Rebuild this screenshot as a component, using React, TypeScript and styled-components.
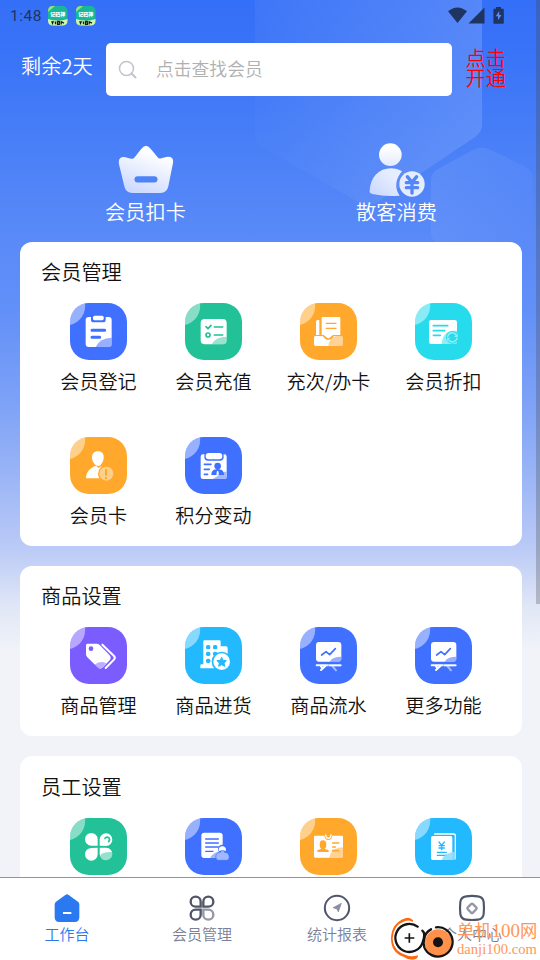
import React from 'react';
import styled, { createGlobalStyle } from 'styled-components';

const GlobalStyle = createGlobalStyle`
  * { box-sizing: border-box; }
  body { margin: 0; overflow: hidden; }
`;

const Phone = styled.div`
  position: relative;
  width: 540px;
  height: 960px;
  overflow: hidden;
  display: flex;
  flex-direction: column;
  background: #f1f3f8;
  font-family: 'Noto Sans CJK SC', 'Noto Sans', sans-serif;
  font-weight: 350;
  color: #111;
`;

const Scroller = styled.main`
  position: relative;
  height: 877px;
  flex: none;
  overflow: hidden;
  isolation: isolate;
  background: linear-gradient(#346ff7 0, #3a74f7 60px, #4a80f7 150px, #5a8af8 240px, #6290f8 310px, #7ca1f7 400px, #9cb6f6 480px, #bccbf6 550px, #dfe6f6 605px, #f1f3f8 650px);
`;

const Backdrop = styled.svg`
  position: absolute;
  top: 0;
  left: 0;
  z-index: -1;
`;

const StatusBar = styled.div`
  height: 30px;
  display: flex;
  align-items: center;
  padding: 1px 35px 0 10px;
  font: 400 15.5px Roboto, sans-serif;
  letter-spacing: 0.5px;
  color: #203461;
`;
const Clock = styled.span`width: 38px;`;
const AppBadges = styled.div`
  display: flex;
  gap: 8px;
  flex: 1;
`;

const SearchRow = styled.header`
  display: flex;
  align-items: center;
  height: 53px;
  margin-top: 13px;
`;
const DaysLeft = styled.div`
  width: 106px;
  padding: 0 0 7px 21px;
  font-size: 20.2px;
  line-height: 28px;
  color: #fff;
  white-space: nowrap;
`;
const SearchBox = styled.div`
  width: 346px;
  height: 53px;
  border-radius: 5px;
  background: #fff;
  display: flex;
  align-items: center;
  gap: 18px;
  padding: 0 12px;
  font-size: 17.8px;
  color: #b0b0b0;
`;
const Placeholder = styled.span`padding-bottom: 4px;`;
const Activate = styled.div`
  width: 44px;
  margin-left: 13.5px;
  padding-bottom: 4px;
  font-size: 20.2px;
  line-height: 20px;
  color: #f00;
`;

const Shortcuts = styled.div`
  display: grid;
  grid-template-columns: 251px 251px;
  padding-left: 20px;
  height: 146px;
  padding-top: 47px;
`;
const Shortcut = styled.div`
  display: flex;
  flex-direction: column;
  align-items: center;
  color: #fff;
  font-size: 20.2px;
  line-height: 28px;
  svg { display: block; margin-bottom: -1px; }
`;

const Card = styled.section<{ $height: number; $top?: number }>`
  width: 502px;
  height: ${p => p.$height}px;
  margin: 0 0 20px 20px;
  padding: ${p => p.$top ?? 14}px 21px 0;
  border-radius: 12px;
  background: #fff;
`;
const CardTitle = styled.h2`
  margin: 0;
  height: 47px;
  font-size: 20.2px;
  line-height: 32px;
  font-weight: inherit;
`;
const ItemGrid = styled.div`
  display: grid;
  grid-template-columns: repeat(4, 115px);
  grid-auto-rows: 134px;
`;
const Item = styled.div`
  display: flex;
  flex-direction: column;
  align-items: center;
`;
const ItemLabel = styled.span`
  margin-top: 7px;
  font-size: 19.1px;
  line-height: 28px;
  white-space: nowrap;
`;
const Tile = styled.div<{ $color: string }>`
  width: 57px;
  height: 57px;
  border-radius: 19px;
  overflow: hidden;
  background: ${p => p.$color};
  svg { display: block; }
`;

const ScrollThumb = styled.div`
  position: absolute;
  top: 0;
  right: 0;
  width: 4px;
  height: 604px;
  background: rgba(70, 70, 70, 0.28);
`;

const TabBar = styled.nav`
  height: 83px;
  flex: none;
  display: grid;
  grid-template-columns: repeat(4, 135px);
  border-top: 1px solid #8d9696;
  background: #fff;
`;
const Tab = styled.div<{ $active?: boolean }>`
  display: flex;
  flex-direction: column;
  align-items: center;
  padding: 15px 1px 0 0;
  font-size: 15px;
  line-height: 22px;
  color: ${p => (p.$active ? '#2878f0' : '#7b8099')};
  svg { display: block; }
`;

const Watermark = styled.div`
  position: absolute;
  left: 390px;
  bottom: 0;
  width: 150px;
  height: 43px;
  display: flex;
  gap: 2px;
  color: #ff9658;
`;
const WatermarkText = styled.div`
  padding-top: 3px;
  white-space: nowrap;
  font-weight: 400;
`;
const SiteName = styled.div`
  font-size: 17.3px;
  line-height: 20px;
`;
const SerifDigits = styled.span`
  font-family: 'Liberation Serif', serif;
  font-size: 19px;
`;
const SiteUrl = styled.div`
  font: 14.6px/17px 'Liberation Serif', serif;
`;

const BLUE = '#3f70ff';
const GREEN = '#22c197';
const ORANGE = '#ffa82b';
const CYAN = '#25dbec';
const PURPLE = '#7b5dff';
const SKY = '#22b9ff';

type Glyph = (c: string) => React.ReactNode;

const stroke = (c: string, w = 7) => ({
  stroke: c,
  strokeWidth: w,
  fill: 'none',
  strokeLinecap: 'round' as const,
  strokeLinejoin: 'round' as const,
});

const clipboard: Glyph = c => (
  <>
    <rect x="47" y="42" width="78" height="90" rx="9" fill="#fff" />
    <path d="M63 40v10q0 8 8 8h28q8 0 8-8V40z" fill={c} />
    <rect x="69" y="38" width="32" height="14" rx="5" fill="#fff" />
    <path d="M66 82h38M66 103h23" {...stroke(c, 9)} />
    <path d="M77 132Q89 105 125 104V123q0 9-9 9z" fill={c} opacity=".55" />
  </>
);
const checklist: Glyph = c => (
  <>
    <rect x="47" y="48" width="78" height="76" rx="12" fill="#fff" />
    <path d="M63 71l6 6 9-10M88 72h25M88 96h25" {...stroke(c, 5)} />
    <circle cx="69" cy="96" r="6" {...stroke(c, 5)} />
    <path d="M80 124Q90 102 125 101V112q0 12-12 12z" fill={c} opacity=".45" />
  </>
);
const inbox: Glyph = c => (
  <>
    <path d="M58 51v45H48V56q0-5 5-5z" fill="#fff" />
    <path d="M65 42h53q3 0 3 3v51H99l-14 11-14-11h-6z" fill="#fff" />
    <path d="M79 61h29M79 76h29" {...stroke(c, 4)} />
    <path d="M46 99h23q5 11 16 11t16-11h24q4 0 4 5v20q0 5-5 5H47q-5 0-5-5v-20q0-5 4-5z" fill="#fff" />
    <path d="M69 98q5 10 16 10t16-10" {...stroke(c, 3)} />
    <path d="M85 129q2-22 22-30h22v30z" fill={c} opacity=".5" />
  </>
);
const discount: Glyph = c => (
  <>
    <rect x="42" y="51" width="84" height="72" rx="7" fill="#fff" />
    <path d="M55 68h43M55 83h34M55 97h21" {...stroke(c, 5)} />
    <path d="M80 123q3-37 34-40h12v34q0 6-6 6z" fill={c} opacity=".5" />
    <circle cx="112" cy="103" r="19" fill={c} />
    <path d="M98 100a14 14 0 0 1 24-6M126 106a14 14 0 0 1-24 6" {...stroke('#90eef7', 5)} />
    <path d="M128 91v11h-11zM96 115v-11h11z" fill="#90eef7" />
  </>
);
const memberAlert: Glyph = c => (
  <>
    <path d="M84 43c12 0 18 8 17 20-1 11-8 24-17 24s-17-13-18-24c-1-12 6-20 18-20z" fill="#fff" />
    <path d="M48 124c0-20 13-32 30-38l8 7 8-6v37z" fill="#fff" />
    <circle cx="109" cy="110" r="25" fill={c} />
    <circle cx="109" cy="110" r="21" fill="#ffd08b" />
    <path d="M108 98v15" {...stroke(c, 6)} />
    <circle cx="108" cy="123" r="3.5" fill={c} />
  </>
);
const badgeClip: Glyph = c => (
  <>
    <rect x="47" y="52" width="78" height="74" rx="7" fill="#fff" />
    <path d="M84 126l33-22h8v15q0 7-7 7z" fill="#a0b8ff" />
    <rect x="58" y="45" width="58" height="26" rx="11" fill={c} />
    <rect x="62" y="48" width="50" height="19" rx="9" fill="#fff" />
    <path d="M58 82h20M58 97h15M58 112h10" {...stroke(c, 5)} />
    <circle cx="98" cy="87" r="10" fill={c} />
    <path d="M79 114c0-14 8-17 19-18 11 1 19 4 19 18z" fill={c} />
    <path d="M96 102h4l2 11h-8z" fill="#fff" />
  </>
);
const tags: Glyph = c => (
  <>
    <path d="M97 53l35 34q5 6 0 11l-25 25" {...stroke('#fff', 6)} />
    <path d="M52 50h28q5 0 9 4l30 31q6 8 0 15l-20 21q-8 8-15 1L52 91q-4-4-4-9V55q0-5 4-5z" fill="#fff" />
    <circle cx="63" cy="65" r="7" fill={c} />
    <path d="M74 113q14-13 35-4l-11 12q-8 8-15 1z" fill={c} opacity=".5" />
  </>
);
const building: Glyph = c => (
  <>
    <path d="M58 40h45q4 0 4 4v14h16q5 0 5 5v41H88v20H46v-9q0-3 4-3h5V43q0-3 3-3z" fill="#fff" />
    {[60, 80, 101].map(y => [69, 90].map(x => <rect key={`${x}-${y}`} x={x - 6} y={y - 6} width="13" height="13" rx="5" fill={c} />))}
    <circle cx="110" cy="104" r="30" fill={c} />
    <circle cx="110" cy="104" r="25" fill="#fff" />
    <path d="M110 91l4 9 10 1-7 7 2 10-9-5-9 5 2-10-7-7 10-1z" fill={c} stroke={c} strokeWidth="3" strokeLinejoin="round" />
  </>
);
const board: Glyph = c => (
  <>
    <rect x="48" y="45" width="76" height="59" rx="9" fill="#fff" />
    <path d="M65 84l13-10 11 9 17-18" {...stroke(c, 5)} />
    <path d="M89 104q8-15 35-15v7q0 8-8 8z" fill={c} opacity=".55" />
    <path d="M50 115h34M76 117l-13 12M63 118l5 6" {...stroke('#fff', 6)} />
    <path d="M86 115h36M97 117l11 13" {...stroke('#a0b8ff', 6)} />
    <path d="M88 115h34" {...stroke('#fff', 5)} />
  </>
);
const clover: Glyph = c => (
  <>
    <path d="M83 83H64a19 19 0 1 1 19-19zM89 83V64a19 19 0 1 1 19 20zM83 89v20a19 19 0 1 1-19-19z" fill="#fff" />
    <path d="M89 89h20a19 19 0 1 1-20 19z" fill="#fff" />
    <path d="M90 114q4-13 38-12 3 26-20 27-15-2-18-15z" fill={c} opacity=".48" />
    <path d="M105 61q6-7 12-1 4 6-1 11" {...stroke(c, 5)} />
  </>
);
const docUser: Glyph = c => (
  <>
    <rect x="49" y="44" width="64" height="76" rx="9" fill="#fff" />
    <path d="M62 63h38M62 75h38M62 87h38M62 100h22" {...stroke(c, 4)} />
    <path d="M75 120q10-20 38-22v22z" fill={c} opacity=".5" />
    <circle cx="112" cy="93" r="13" fill={c} />
    <path d="M102 99c-6-19 26-19 20 0z" fill="#fff" />
    <path d="M93 121c-3-12 5-18 14-18v-5h11v5c10 0 17 8 14 18q-1 6-7 6h-25q-6 0-7-6z" fill="#a0b8ff" stroke={c} strokeWidth="2" />
  </>
);
const idCard: Glyph = c => (
  <>
    <rect x="42" y="53" width="87" height="66" rx="4" fill="#fff" />
    <path d="M73 52q1 14 12 14t12-14z" fill={c} />
    <path d="M77 51q1 10 8 10t8-10" {...stroke('#fff', 4)} />
    <ellipse cx="69" cy="80" rx="10" ry="13" fill={c} />
    <path d="M64 87h10v5l12 5v5H52v-5l12-5z" fill={c} />
    <path d="M98 75h18M98 87h8M98 98h18" {...stroke(c, 5)} />
    <path d="M87 119q7-30 42-31v27q0 4-4 4z" fill={c} opacity=".5" />
  </>
);
const ledger: Glyph = c => (
  <>
    <path d="M59 48h57q5 0 5 5v69" {...stroke('#fff', 4)} />
    <rect x="48" y="54" width="64" height="72" rx="5" fill="#fff" />
    <path d="M72 72l8 10 8-10M72 83h16M72 90h16M80 82v13" {...stroke(c, 4)} />
    <path d="M67 103h27M67 112h27" {...stroke(c, 4)} />
    <path d="M80 126q8-23 42-25v21q0 4-6 4z" fill="#90dcff" opacity=".9" />
  </>
);

interface Entry { label: string; color: string; glyph: Glyph }
interface Group { title: string; height: number; top?: number; entries: Entry[] }

const groups: Group[] = [
  {
    title: '会员管理', height: 304, entries: [
      { label: '会员登记', color: BLUE, glyph: clipboard },
      { label: '会员充值', color: GREEN, glyph: checklist },
      { label: '充次/办卡', color: ORANGE, glyph: inbox },
      { label: '会员折扣', color: CYAN, glyph: discount },
      { label: '会员卡', color: ORANGE, glyph: memberAlert },
      { label: '积分变动', color: BLUE, glyph: badgeClip },
    ],
  },
  {
    title: '商品设置', height: 170, entries: [
      { label: '商品管理', color: PURPLE, glyph: tags },
      { label: '商品进货', color: SKY, glyph: building },
      { label: '商品流水', color: BLUE, glyph: board },
      { label: '更多功能', color: BLUE, glyph: board },
    ],
  },
  {
    title: '员工设置', height: 170, top: 15, entries: [
      { label: '', color: GREEN, glyph: clover },
      { label: '', color: BLUE, glyph: docUser },
      { label: '', color: ORANGE, glyph: idCard },
      { label: '', color: SKY, glyph: ledger },
    ],
  },
];

const FeatureItem = ({ label, color, glyph }: Entry) => (
  <Item>
    <Tile $color={color}>
      <svg width="57" height="57" viewBox="0 0 171 171">
        <circle cx="-13" cy="9" r="58.5" fill="#fff" opacity=".46" />
        {glyph(color)}
      </svg>
    </Tile>
    {label && <ItemLabel>{label}</ItemLabel>}
  </Item>
);

const AppBadge = () => (
  <svg width="20" height="20" viewBox="0 0 20 20">
    <rect width="19.5" height="19.5" rx="5" fill="#19b69b" />
    <path d="M0 6V5q0-5 5-5h2z" fill="#9be36c" />
    <path d="M0 13q10 3 19.500 0v1.500q0 5-5 5H5q-5 0-5-5z" fill="#cdf7b0" />
    <text x="9.800" y="9.600" textAnchor="middle" fontFamily="Noto Sans CJK SC" fontWeight="900" fontSize="5" letterSpacing="0" fill="#fff">记码神</text>
    <path d="M4.500 15.500v3M3.200 15.800h3M7.500 15.500v2.800M9.500 15.500v2.800h1.800v-2.800zM13.200 18.500v-2.800l2.800 1.400" stroke="#171d14" strokeWidth="1.300" fill="none" />
  </svg>
);

const StatusIcons = () => (
  <svg width="58" height="20" viewBox="0 0 58 20" fill="#203461">
    <path d="M1 5.300Q10.500-2.300 20 5.300L10.500 17z" />
    <path d="M21.500 17.500L37.500 1.500v16z" />
    <path d="M49 1h5v1.800h2q.8 0 .8.800v13.300q0 .8-.8.800h-8.800q-.8 0-.8-.8V3.600q0-.8.8-.8H49z" />
    <path d="M52.200 5l-3.500 5.300h2.300v4l3.500-5.200h-2.300z" fill="#5b8df8" />
  </svg>
);

const CrownIcon = () => (
  <svg width="56" height="56" viewBox="0 0 168 168">
    <defs>
      <linearGradient id="crown" x1=".7" y1="0" x2=".3" y2="1">
        <stop offset=".15" stopColor="#fff" /><stop offset="1" stopColor="#ccd9fe" />
      </linearGradient>
    </defs>
    <path d="M69 19Q84-3 99 19L119 43q3 5 11 3l15-4q23-4 20 18l-14 70q-4 20-24 20H43q-20 0-24-20L3 64q-4-23 16-22l20 5q6 2 11-4z" fill="url(#crown)" />
    <path d="M59 109h50" stroke="#4e82f7" strokeWidth="19" strokeLinecap="round" />
  </svg>
);

const CustomerIcon = () => (
  <svg width="56" height="56" viewBox="0 0 168 168">
    <defs>
      <linearGradient id="head" x1="0" y1="0" x2="0" y2="1">
        <stop offset=".2" stopColor="#fff" /><stop offset="1" stopColor="#e2eafe" />
      </linearGradient>
      <linearGradient id="torso" x1="1" y1="0" x2="0" y2="1">
        <stop offset=".3" stopColor="#e5edff" /><stop offset="1" stopColor="#c8d6fe" />
      </linearGradient>
    </defs>
    <circle cx="64" cy="35" r="34" fill="url(#head)" />
    <path d="M2 144C4 100 31 77 65 76q20 0 34 9Q68 122 92 158 50 162 14 154 0 151 2 144z" fill="url(#torso)" />
    <circle cx="129" cy="123" r="38" fill="#e4ecff" />
    <path d="M115 101l14 17 14-17M112 119h34M112 134h34M129 119v31" stroke="#5586f8" strokeWidth="10" strokeLinecap="round" strokeLinejoin="round" fill="none" />
  </svg>
);

const HomeIcon = () => (
  <svg width="30" height="30" viewBox="0 0 90 90">
    <path d="M40 6q5-5 10 0l29 21q3 3 3 8v38q0 14-14 14H22Q8 87 8 73V35q0-5 3-8z" fill="#2b79f0" />
    <path d="M33 60h25" stroke="#fff" strokeWidth="6" />
  </svg>
);
const PetalsIcon = () => (
  <svg width="30" height="30" viewBox="0 0 90 90" fill="none" stroke="#505669" strokeWidth="7">
    <path d="M41 41H26a15 15 0 1 1 15-15zM49 41V26a15 15 0 1 1 15 15zM41 50v15a15 15 0 1 1-15-15z" />
    <path d="M49 50h15a15 15 0 1 1-15 15z" stroke="#9498a5" />
  </svg>
);
const CompassIcon = () => (
  <svg width="30" height="30" viewBox="0 0 90 90">
    <circle cx="45" cy="45" r="36.500" fill="none" stroke="#50566b" strokeWidth="6" />
    <path d="M58 31L33 44l12 4 4 9z" fill="#888da0" stroke="#888da0" strokeWidth="2" />
  </svg>
);
const ProfileIcon = () => (
  <svg width="30" height="30" viewBox="0 0 90 90" fill="none">
    <path d="M27 10Q45 7 63 10q15 2 17 17 2 18 0 36-2 15-17 17-18 2-36 0Q12 78 10 63 8 45 10 27 12 12 27 10z" stroke="#50566b" strokeWidth="6.500" />
    <rect x="34" y="35" width="22" height="22" rx="4" transform="rotate(45 45 46)" stroke="#9498a5" strokeWidth="7" />
  </svg>
);

const SiteLogo = () => (
  <svg width="65" height="43" viewBox="0 0 195 129">
    <path d="M69 10Q60-1 46 4 5 18 3 63q0 45 39 57 14 10 32 7 10-2 10-12-16 5-30 1Q10 106 8 64 10 24 44 13q14-6 25 2z" fill="#ff680c" />
    <circle cx="58" cy="64" r="42" fill="#fff" />
    <path d="M83 29A42 42 0 1 0 98 76Q108 49 97 41M123 37q-16 8-20 26" stroke="#151313" strokeWidth="7" fill="none" strokeLinecap="round" />
    <circle cx="145" cy="77" r="40" fill="#ff914a" />
    <path d="M138 31a44 44 0 1 1-35 60Q99 77 103 63" stroke="#151313" strokeWidth="7" fill="none" strokeLinecap="round" />
    <circle cx="144" cy="76" r="15" fill="#151313" />
    <path d="M44 63h29M58 49v28" stroke="#151313" strokeWidth="5" />
  </svg>
);

const tabs = [
  { label: '工作台', icon: <HomeIcon />, active: true },
  { label: '会员管理', icon: <PetalsIcon /> },
  { label: '统计报表', icon: <CompassIcon /> },
  { label: '个人中心', icon: <ProfileIcon /> },
];

export default function App() {
  return (
    <Phone>
      <GlobalStyle />
      <Scroller>
        <Backdrop width="540" height="260" viewBox="0 0 540 260">
          <defs>
            <linearGradient id="hexBig" x1="0" y1=".5" x2="1" y2="0">
              <stop offset="0" stopColor="#fff" stopOpacity=".02" /><stop offset="1" stopColor="#fff" stopOpacity=".17" />
            </linearGradient>
            <linearGradient id="hexSmall" x1="0" y1="0" x2="1" y2="1">
              <stop offset="0" stopColor="#fff" stopOpacity=".09" /><stop offset="1" stopColor="#fff" stopOpacity="0" />
            </linearGradient>
          </defs>
          <path d="M255 0H482V125q0 7-7 12L378 202q-10 6-20 0L262 147q-7-5-7-12z" fill="url(#hexBig)" />
          <path d="M473 150q9-5 18 0l35 17q7 4 7 12v58q0 8-7 12h-78l-10-5q-7-4-7-12v-51q0-8 7-12z" fill="url(#hexSmall)" />
        </Backdrop>
        <StatusBar>
          <Clock>1:48</Clock>
          <AppBadges><AppBadge /><AppBadge /></AppBadges>
          <StatusIcons />
        </StatusBar>
        <SearchRow>
          <DaysLeft>剩余2天</DaysLeft>
          <SearchBox>
            <svg width="20" height="20" viewBox="0 0 20 20" fill="none" stroke="#c0c4cc" strokeLinecap="round">
              <circle cx="8.500" cy="8.500" r="7" strokeWidth="1.500" />
              <path d="M13.500 13.500l4 4" strokeWidth="2" />
            </svg>
            <Placeholder>点击查找会员</Placeholder>
          </SearchBox>
          <Activate>点击<br />开通</Activate>
        </SearchRow>
        <Shortcuts>
          <Shortcut><CrownIcon />会员扣卡</Shortcut>
          <Shortcut><CustomerIcon />散客消费</Shortcut>
        </Shortcuts>
        {groups.map(g => (
          <Card key={g.title} $height={g.height} $top={g.top}>
            <CardTitle>{g.title}</CardTitle>
            <ItemGrid>
              {g.entries.map((e, i) => <FeatureItem key={i} {...e} />)}
            </ItemGrid>
          </Card>
        ))}
        <ScrollThumb />
      </Scroller>
      <TabBar>
        {tabs.map(t => (
          <Tab key={t.label} $active={t.active}>{t.icon}{t.label}</Tab>
        ))}
      </TabBar>
      <Watermark>
        <SiteLogo />
        <WatermarkText>
          <SiteName>单机<SerifDigits>100</SerifDigits>网</SiteName>
          <SiteUrl>danji100.com</SiteUrl>
        </WatermarkText>
      </Watermark>
    </Phone>
  );
}
